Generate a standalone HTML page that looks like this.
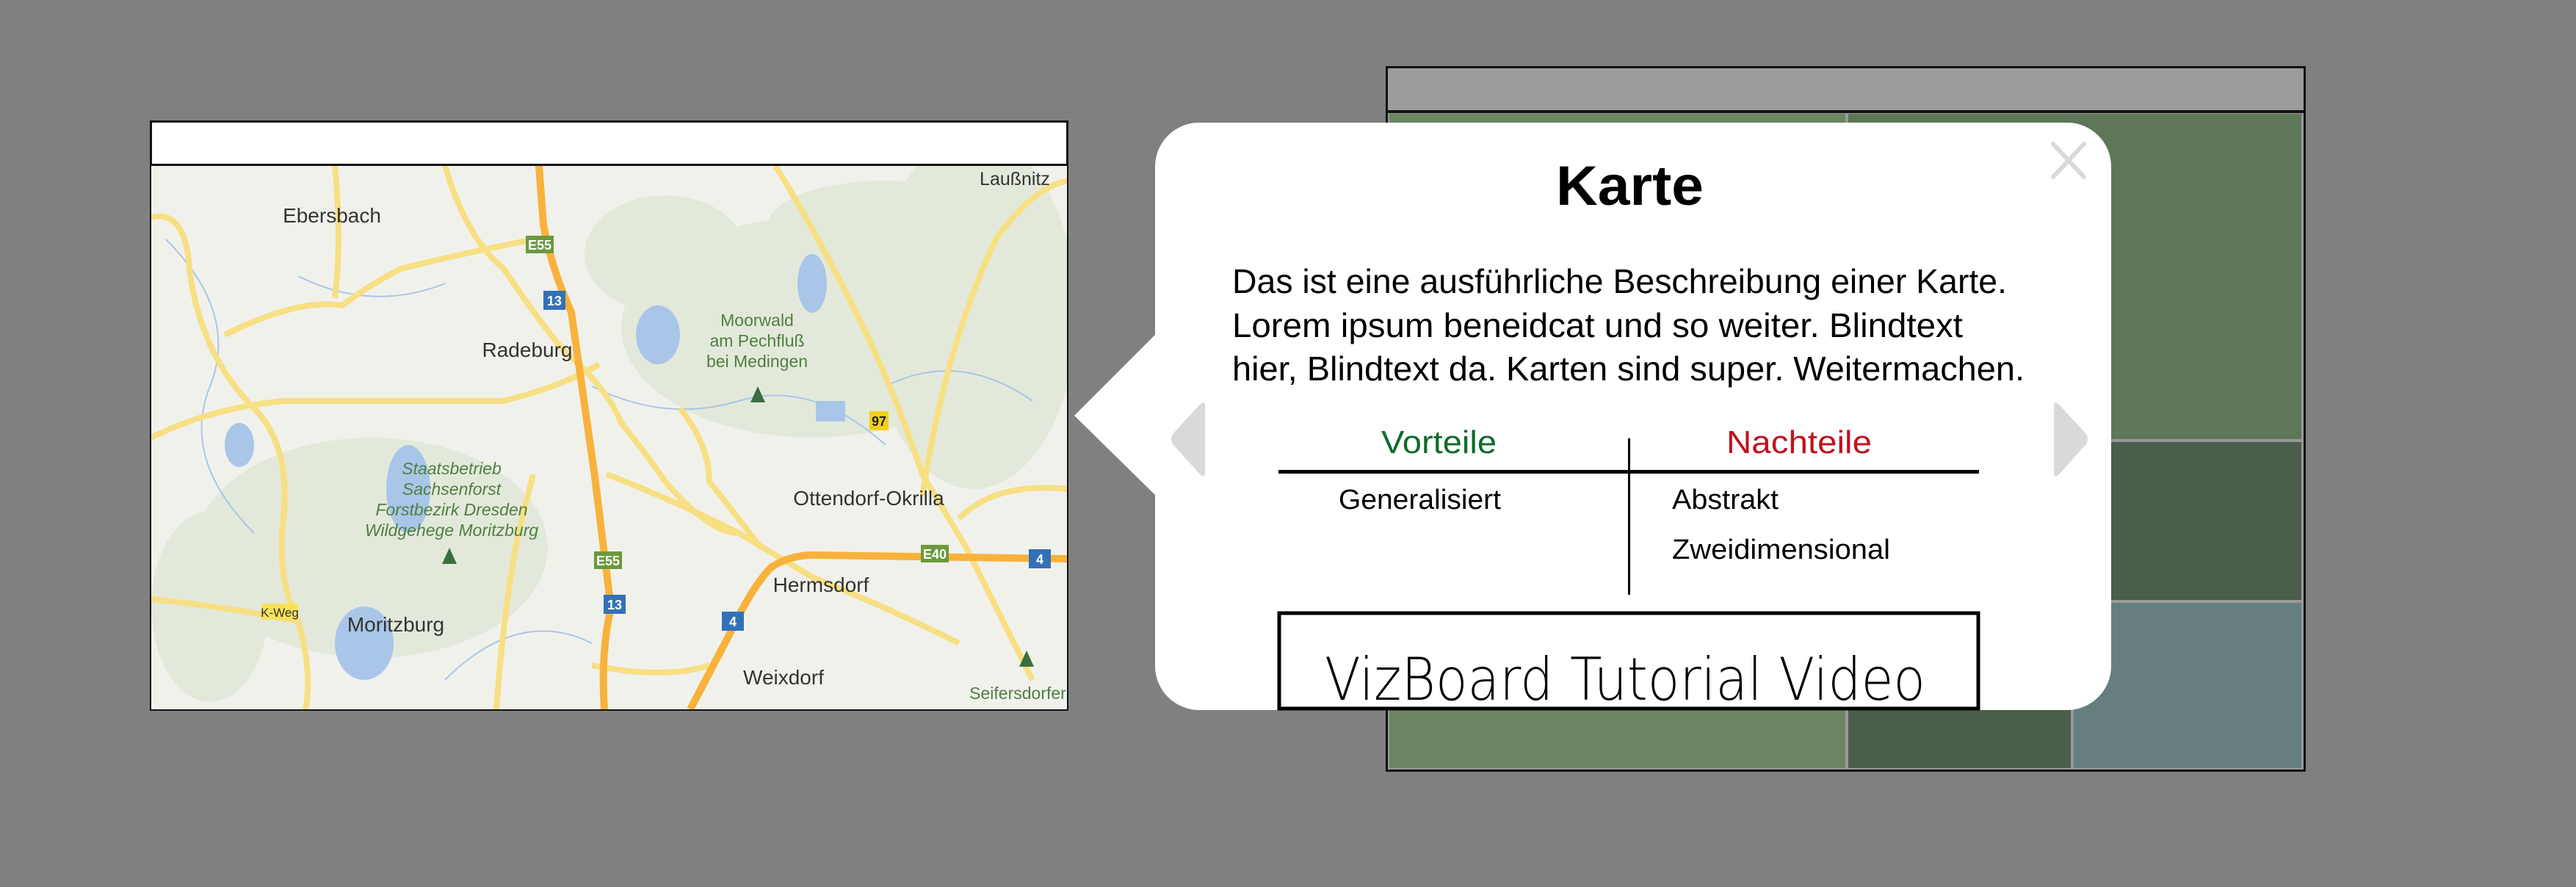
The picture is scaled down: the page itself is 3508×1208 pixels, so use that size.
<!DOCTYPE html>
<html><head><meta charset="utf-8"><style>
html,body{margin:0;padding:0}
body{width:3508px;height:1208px;background:#808080;position:relative;overflow:hidden;font-family:"Liberation Sans",sans-serif}
.abs{position:absolute}
</style></head><body>

<!-- right grid -->
<div class="abs" style="left:1887px;top:90px;width:1253px;height:961px;border:3px solid #111;box-sizing:border-box;background:#999"></div>
<div class="abs" style="left:1890px;top:93px;width:1247px;height:57px;background:#9c9c9c;border-bottom:4px solid #111"></div>
<div class="abs" style="left:1892px;top:155px;width:621px;height:891px;background:#6b8560"></div>
<div class="abs" style="left:2517px;top:155px;width:617px;height:443px;background:#5e7758"></div>
<div class="abs" style="left:2517px;top:602px;width:617px;height:215px;background:#4b5d4b"></div>
<div class="abs" style="left:2517px;top:821px;width:303px;height:225px;background:#4b5d4b"></div>
<div class="abs" style="left:2824px;top:821px;width:310px;height:225px;background:#667f7e"></div>

<!-- map -->
<div class="abs" style="left:204px;top:164px;width:1251px;height:804px;border:3px solid #111;box-sizing:border-box;background:#fff"></div>
<div class="abs" style="left:206px;top:223px;width:1247px;height:3px;background:#111"></div>
<svg class="abs" style="left:206px;top:226px" width="1247" height="740" viewBox="0 0 1247 740">
<rect width="1247" height="740" fill="#f1f1ec"/>
<g fill="#e3e9da">
<ellipse cx="900" cy="220" rx="260" ry="150"/><ellipse cx="1120" cy="200" rx="140" ry="240"/>
<ellipse cx="300" cy="520" rx="240" ry="150"/><ellipse cx="700" cy="120" rx="110" ry="80"/>
<ellipse cx="80" cy="600" rx="80" ry="130"/><ellipse cx="1000" cy="80" rx="160" ry="60"/>
</g>
<g fill="#a9c6e8"><ellipse cx="900" cy="160" rx="20" ry="40"/><ellipse cx="350" cy="440" rx="30" ry="60"/><ellipse cx="290" cy="650" rx="40" ry="50"/><rect x="905" y="320" width="40" height="28"/><ellipse cx="120" cy="380" rx="20" ry="30"/><ellipse cx="690" cy="230" rx="30" ry="40"/></g>
<g fill="none" stroke="#a9c6e8" stroke-width="2">
<path d="M20 100 Q120 200 80 300 T140 500"/><path d="M600 300 Q700 350 800 320 T1000 380"/><path d="M1000 300 Q1100 250 1200 320"/><path d="M200 150 Q300 200 400 160"/><path d="M400 700 Q500 600 600 650"/>
</g>
<g fill="none" stroke="#f7df83" stroke-width="8">
<path d="M0 70 Q40 60 50 120 Q60 250 140 330 Q190 380 180 480 Q170 560 200 620 Q220 690 210 740"/>
<path d="M0 370 Q80 330 180 320 L480 320 Q560 300 610 270"/>
<path d="M100 230 Q200 180 260 190 Q300 160 340 140 Q420 120 520 100"/>
<path d="M250 0 Q260 100 250 180"/>
<path d="M400 0 Q430 100 480 140 Q520 200 560 250 Q620 300 640 350 Q680 400 700 430 Q760 500 800 500"/>
<path d="M720 330 Q760 380 760 430 Q800 480 830 520"/>
<path d="M850 0 Q900 80 960 200 Q1010 300 1050 420 Q1080 470 1110 520 Q1150 600 1200 700"/>
<path d="M1050 450 Q1080 250 1150 100 Q1200 30 1247 20"/>
<path d="M0 590 Q100 600 200 620"/>
<path d="M620 420 Q700 450 800 500 L900 560 Q1000 600 1100 650"/>
<path d="M1247 440 Q1150 430 1100 480"/>
<path d="M520 420 L500 500 Q480 600 470 740"/>
<path d="M600 680 Q700 700 760 680"/>
</g>
<g fill="none" stroke="#f8b23c" stroke-width="10">
<path d="M528 0 L534 80 Q545 140 572 199 L604 423 L626 602 Q612 660 617 740"/>
<path d="M734 740 L789 635 Q820 570 845 546 Q870 530 901 530 L1247 535"/>
</g>
<g font-family="Liberation Sans" font-size="18" font-weight="bold" text-anchor="middle">
<rect x="510" y="95" width="38" height="24" fill="#6a9a3c"/><text x="529" y="114" fill="#fff">E55</text>
<rect x="534" y="170" width="30" height="26" fill="#3271b8"/><text x="549" y="190" fill="#fff">13</text>
<rect x="603" y="525" width="38" height="24" fill="#6a9a3c"/><text x="622" y="544" fill="#fff">E55</text>
<rect x="616" y="584" width="30" height="26" fill="#3271b8"/><text x="631" y="604" fill="#fff">13</text>
<rect x="978" y="334" width="26" height="26" fill="#f5cf1a"/><text x="991" y="354" fill="#222">97</text>
<rect x="1048" y="516" width="38" height="24" fill="#6a9a3c"/><text x="1067" y="535" fill="#fff">E40</text>
<rect x="1195" y="522" width="30" height="26" fill="#3271b8"/><text x="1210" y="542" fill="#fff">4</text>
<rect x="777" y="607" width="30" height="26" fill="#3271b8"/><text x="792" y="627" fill="#fff">4</text>
<rect x="150" y="596" width="50" height="22" fill="#f7e25a"/><text x="175" y="614" fill="#333" font-weight="normal" font-size="17">K-Weg</text>
</g>
<g font-family="Liberation Sans" font-size="28" fill="#333" text-anchor="middle">
<text x="246" y="77">Ebersbach</text><text x="512" y="260">Radeburg</text>
<text x="977" y="462">Ottendorf-Okrilla</text><text x="912" y="580">Hermsdorf</text>
<text x="333" y="634">Moritzburg</text><text x="861" y="706">Weixdorf</text>
<text x="1176" y="26" font-size="25">Laußnitz</text>
</g>
<g font-family="Liberation Sans" font-size="23" fill="#4f8040" text-anchor="middle">
<text x="825" y="218">Moorwald</text><text x="825" y="246">am Pechfluß</text><text x="825" y="274">bei Medingen</text>
<g font-style="italic"><text x="409" y="420">Staatsbetrieb</text><text x="409" y="448">Sachsenforst</text><text x="409" y="476">Forstbezirk Dresden</text><text x="409" y="504">Wildgehege Moritzburg</text></g>
<text x="1180" y="726">Seifersdorfer</text>
</g>
<g fill="#3b6e3f"><path d="M826 300 l-10 22 h20z"/><path d="M406 520 l-10 22 h20z"/><path d="M1192 660 l-10 22 h20z"/></g>
</svg>

<!-- popup -->
<svg class="abs" style="left:1460px;top:160px" width="1430" height="820" viewBox="1460 160 1430 820">
<rect x="1573" y="167" width="1302" height="800" rx="60" fill="#fff"/>
<polygon points="1463,566 1575,454 1575,676" fill="#fff"/>
<path d="M1641 552 L1641 644 Q1641 652 1634 646 L1598 606 Q1592 598 1598 590 L1634 551 Q1641 545 1641 552Z" fill="#d9d9d9"/>
<path d="M2797 552 L2797 644 Q2797 652 2804 646 L2840 606 Q2846 598 2840 590 L2804 551 Q2797 545 2797 552Z" fill="#d9d9d9"/>
<path d="M2796 196 L2838 241 M2838 196 L2796 241" stroke="#d9d9d9" stroke-width="6" stroke-linecap="round"/>
<g font-family="Liberation Sans" fill="#000">
<text x="2119" y="279" font-size="76" font-weight="bold" textLength="201" lengthAdjust="spacingAndGlyphs">Karte</text>
<text x="1678" y="399" font-size="46" textLength="1055" lengthAdjust="spacingAndGlyphs">Das ist eine ausführliche Beschreibung einer Karte.</text>
<text x="1678" y="459" font-size="46" textLength="995" lengthAdjust="spacingAndGlyphs">Lorem ipsum beneidcat und so weiter. Blindtext</text>
<text x="1678" y="518" font-size="46" textLength="1079" lengthAdjust="spacingAndGlyphs">hier, Blindtext da. Karten sind super. Weitermachen.</text>
<text x="1881" y="617" font-size="44" fill="#0f6b2b" textLength="157" lengthAdjust="spacingAndGlyphs">Vorteile</text>
<text x="2351" y="617" font-size="44" fill="#c0121c" textLength="198" lengthAdjust="spacingAndGlyphs">Nachteile</text>
<text x="1823" y="693" font-size="38" textLength="221" lengthAdjust="spacingAndGlyphs">Generalisiert</text>
<text x="2277" y="693" font-size="38" textLength="145" lengthAdjust="spacingAndGlyphs">Abstrakt</text>
<text x="2277" y="761" font-size="38" textLength="297" lengthAdjust="spacingAndGlyphs">Zweidimensional</text>
<rect x="1741" y="640" width="954" height="5"/>
<rect x="2217" y="597" width="3" height="213"/>
<rect x="1742" y="835" width="952" height="130" fill="#fff" stroke="#000" stroke-width="5"/>
<text x="1804" y="953" font-size="80" font-family="DejaVu Sans, Liberation Sans, sans-serif" font-weight="200" textLength="818" lengthAdjust="spacingAndGlyphs">VizBoard Tutorial Video</text>
</g>
</svg>
</body></html>
